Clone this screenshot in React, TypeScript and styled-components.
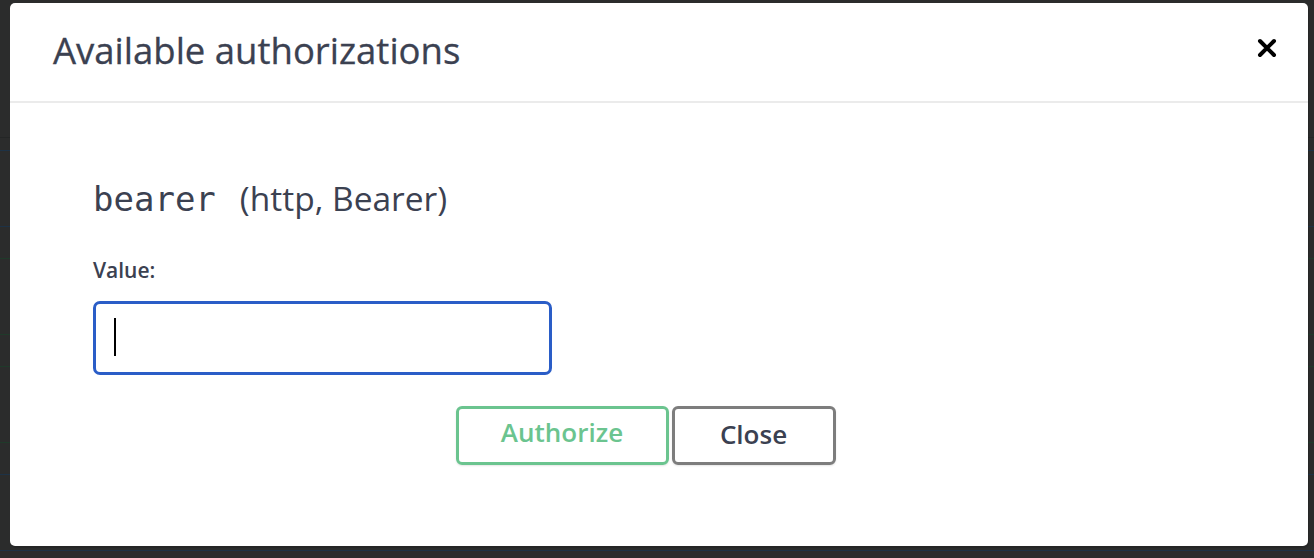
import React from 'react'
import styled, { createGlobalStyle } from 'styled-components'

const GlobalStyle = createGlobalStyle`
  html, body {
    margin: 0;
    padding: 0;
    background: #2b2c2c;
    font-family: "Open Sans", "Noto Sans", sans-serif;
  }
`

const blocks = ['#1d3246', '#1f3a2a', '#1f3a2a', '#1d3246']

const App: React.FunctionComponent = () => {
  return (
    <>
      <GlobalStyle />
      <Page>
        <Backdrop>
          <Divider />
          {blocks.map((color, i) => (
            <OpBlock key={i} $color={color} />
          ))}
        </Backdrop>
        <Modal>
          <Header>
            <Title>Available authorizations</Title>
            <CloseIcon aria-label="Close">
              <svg width="20" height="20" viewBox="0 0 20 20">
                <path d="M3 3 L17 17 M17 3 L3 17" stroke="#000" strokeWidth="4" strokeLinecap="round" />
              </svg>
            </CloseIcon>
          </Header>
          <Content>
            <SchemeTitle>
              <Code>bearer</Code>
              <Meta>(http, Bearer)</Meta>
            </SchemeTitle>
            <Label htmlFor="value">Value:</Label>
            <InputWrap>
              <Input id="value" type="text" />
              <Caret />
            </InputWrap>
            <ButtonRow>
              <Button $color="#6bc48f" $text="#6bc48f" $width={213}>Authorize</Button>
              <Button $color="#7d7d7d" $text="#3b4151" $width={164} $last>Close</Button>
            </ButtonRow>
          </Content>
        </Modal>
      </Page>
    </>
  )
}

export default App

const Page = styled.div`
  position: relative;
  width: 1314px;
  height: 558px;
  overflow: hidden;
  background: #2b2c2c;
`

const Backdrop = styled.div`
  display: flex;
  flex-direction: column;
  padding-top: 137px;
`

const Divider = styled.div`
  height: 1px;
  background: #242626;
  margin-bottom: 12px;
`

const OpBlock = styled.div<{ $color: string }>`
  height: 77px;
  border-top: 1px solid ${({ $color }) => $color};
  border-bottom: 1px solid ${({ $color }) => $color};
  margin-bottom: 31px;
  box-sizing: border-box;
`

const Modal = styled.div`
  position: absolute;
  left: 10px;
  top: 3px;
  width: 1298px;
  height: 543px;
  background: #fff;
  border-radius: 5px;
  box-shadow: 1px 2px 1px rgba(0, 0, 0, 0.15);
  display: flex;
  flex-direction: column;
`

const Header = styled.div`
  height: 98px;
  border-bottom: 2px solid #ebebeb;
  display: flex;
  align-items: center;
  justify-content: space-between;
  padding: 0 31px 0 43px;
  flex-shrink: 0;
`

const Title = styled.h3`
  margin: 0 0 4px;
  font-size: 36.5px;
  font-weight: 500;
  color: #3b4151;
  -webkit-text-stroke: 0.3px #3b4151;
`

const CloseIcon = styled.button`
  border: none;
  background: none;
  padding: 0;
  margin-bottom: 8px;
  display: flex;
  cursor: pointer;
`

const Content = styled.div`
  display: flex;
  flex-direction: column;
  padding: 72px 83px 0;
`

const SchemeTitle = styled.h4`
  margin: 0 0 35px;
  display: flex;
  align-items: baseline;
  gap: 24px;
  color: #3b4151;
  font-weight: 400;
`

const Code = styled.span`
  font-family: "DejaVu Sans Mono", "Liberation Mono", monospace;
  font-size: 34px;
`

const Meta = styled.span`
  font-size: 33.5px;
`

const Label = styled.label`
  font-size: 21px;
  font-weight: 600;
  color: #3b4151;
  margin-bottom: 17px;
`

const InputWrap = styled.div`
  position: relative;
  width: 459px;
`

const Input = styled.input`
  display: block;
  width: 459px;
  height: 74px;
  box-sizing: border-box;
  border: 3px solid #2a5dc7;
  border-radius: 7px;
  outline: none;
  padding: 0 20px;
  font-size: 21px;
  color: #3b4151;
  font-family: inherit;
`

const Caret = styled.span`
  position: absolute;
  left: 21px;
  top: 17px;
  width: 2px;
  height: 38px;
  background: #000;
`

const ButtonRow = styled.div`
  display: flex;
  justify-content: center;
  margin-top: 31px;
`

const Button = styled.button<{ $color: string; $text: string; $width: number; $last?: boolean }>`
  width: ${({ $width }) => $width}px;
  height: 59px;
  padding: 0 0 ${({ $last }) => ($last ? '3px' : '8px')};
  margin-right: ${({ $last }) => ($last ? '27px' : '3px')};
  background: transparent;
  border: 3px solid ${({ $color }) => $color};
  border-radius: 6px;
  color: ${({ $text }) => $text};
  font-family: inherit;
  font-size: 26px;
  font-weight: 600;
  box-shadow: 0 1px 2px rgba(0, 0, 0, 0.1);
  cursor: pointer;
`
